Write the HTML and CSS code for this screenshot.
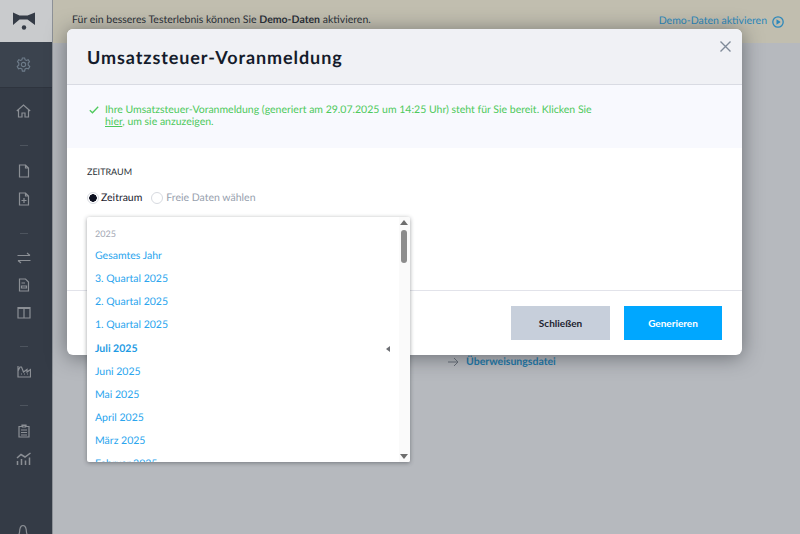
FILE: index.html
```html
<!DOCTYPE html>
<html>
<head>
  <title>Umsatzsteuer-Voranmeldung</title>
  <meta http-equiv="content-type" content="text/html; charset=utf-8" />
  <link rel="stylesheet" href="styles.css">
</head>
<body>
  <div class="app">
    <div class="sidebar">
      <div class="logo">
        <svg width="24" height="18" viewBox="0 0 24 18"><path d="M1 0.500 L7.500 3.500 H15.500 L23 0.500 V13 L15.500 7.500 H7.500 L1 13 Z" fill="#343b46"/><circle cx="12" cy="15.500" r="2.200" fill="#343b46"/></svg>
      </div>
      <div class="settings">
        <svg class="icon" width="15" height="15" viewBox="0 0 16 16"><path d="M6.800 1 H9.200 L9.700 3 L11.200 3.700 L13 2.900 L14.400 5 L13 6.500 V8.500 L14.700 10.300 L13.300 12.600 L11.200 12 L9.700 12.800 L9.200 15 H6.800 L6.300 12.800 L4.800 12 L2.700 12.600 L1.300 10.300 L3 8.500 V6.500 L1.600 5 L3 2.900 L4.800 3.700 L6.300 3 Z"/><circle cx="8" cy="8" r="2.300"/></svg>
      </div>
      <div class="nav-group nav-home">
        <svg class="icon" width="15" height="14" viewBox="0 0 15 14"><path d="M0.800 7 L7.500 1 L14.200 7 M2.500 5.800 V13 H6 V9 H9 V13 H12.500 V5.800"/></svg>
      </div>
      <div class="sep"></div>
      <div class="nav-group">
        <svg class="icon" width="12" height="14" viewBox="0 0 12 14"><path d="M1.500 1 H7.500 L10.500 4 V13 H1.500 Z M7.500 1 V4 H10.500"/></svg>
        <svg class="icon" width="12" height="14" viewBox="0 0 12 14"><path d="M1.500 1 H7.500 L10.500 4 V13 H1.500 Z M7.500 1 V4 H10.500 M6 6 V11 M3.500 8.500 H8.500"/></svg>
      </div>
      <div class="sep"></div>
      <div class="nav-group">
        <svg class="icon" width="14" height="12" viewBox="0 0 14 12"><path d="M0.500 3.500 H13 M10 1 L13 3.500 M13.500 8.500 H1 M4 11 L1 8.500"/></svg>
        <svg class="icon" width="12" height="14" viewBox="0 0 12 14"><path d="M1.500 1 H7.500 L10.500 4 V13 H1.500 Z M3.500 5 H7 M3.500 8 H8.500 V10 H3.500 Z"/></svg>
        <svg class="icon" width="14" height="13" viewBox="0 0 14 13"><path d="M1 1.500 H13 V12 H1 Z M7 1.500 V12 M1 2.500 H13"/></svg>
      </div>
      <div class="sep"></div>
      <div class="nav-group">
        <svg class="icon" width="14" height="13" viewBox="0 0 14 13"><path d="M1 1 V12 H13.500 V4.500 L10 7 V4.500 L6.500 7 L4.500 2 H3 L1 6"/><path d="M4 9 H5 M7 9 H8 M10 9 H11"/></svg>
      </div>
      <div class="sep"></div>
      <div class="nav-group">
        <svg class="icon" width="12" height="14" viewBox="0 0 12 14"><path d="M1 2.500 H4 V1 H8 V2.500 H11 V13 H1 Z"/><path d="M4.500 1.500 H7.500 V3 H4.500 Z M3 6 H9 M3 8.500 H9 M3 11 H9"/></svg>
        <svg class="icon" width="16" height="14" viewBox="0 0 16 14"><path d="M1 6 L5 2.500 L9 5 L14.500 1 M1.500 9 V13 M5.500 7 V13 M9.500 8.500 V13 M13.500 5.500 V13" stroke-width="1.500"/></svg>
      </div>
      <div class="bell">
        <svg class="icon" width="14" height="12" viewBox="0 0 14 12"><path d="M1 11 H13 M2.500 11 C4 9 3.500 6 4 4.500 C4.500 2.500 6 1.500 7 1.500 C8 1.500 9.500 2.500 10 4.500 C10.500 6 10 9 11.500 11"/></svg>
      </div>
    </div>

    <div class="main">
      <div class="banner">
        <p>Für ein besseres Testerlebnis können Sie <b>Demo-Daten</b> aktivieren.</p>
        <a class="banner-link">Demo-Daten aktivieren
          <svg width="12" height="12" viewBox="0 0 12 12"><circle cx="6" cy="6" r="5.200" fill="none" stroke="#2d88bb" stroke-width="1.300"/><path d="M4.500 3.300 L8.700 6 L4.500 8.700 Z" fill="#2d88bb"/></svg>
        </a>
      </div>
      <div class="behind">
        <svg width="11" height="10" viewBox="0 0 11 10"><path d="M0 5 H10 M6 1 L10 5 L6 9" fill="none" stroke="#69707a" stroke-width="1"/></svg>
        <a>Überweisungsdatei</a>
      </div>
    </div>
  </div>

  <div class="modal">
    <div class="modal-head">
      <h1>Umsatzsteuer-Voranmeldung</h1>
      <svg class="close" width="11" height="11" viewBox="0 0 11 11"><path d="M0.500 0.500 L10.500 10.500 M10.500 0.500 L0.500 10.500" stroke="#7f8a99" stroke-width="1.400"/></svg>
    </div>
    <div class="alert">
      <svg width="10" height="8" viewBox="0 0 10 8"><path d="M0.800 4.200 L3.500 6.800 L9.200 0.800" fill="none" stroke="#4ec95c" stroke-width="1.300"/></svg>
      <p>Ihre Umsatzsteuer-Voranmeldung (generiert am 29.07.2025 um 14:25 Uhr) steht für Sie bereit. Klicken Sie <u>hier</u>, um sie anzuzeigen.</p>
    </div>
    <div class="modal-body">
      <div class="label">ZEITRAUM</div>
      <div class="radios">
        <span class="radio on"></span><span class="radio-text">Zeitraum</span>
        <span class="radio"></span><span class="radio-text off">Freie Daten wählen</span>
      </div>
    </div>
    <div class="modal-foot">
      <button class="btn btn-grey">Schließen</button>
      <button class="btn btn-blue">Generieren</button>
    </div>
  </div>

  <div class="dropdown">
    <div class="list">
      <div class="year">2025</div>
      <div class="item">Gesamtes Jahr</div>
      <div class="item">3. Quartal 2025</div>
      <div class="item">2. Quartal 2025</div>
      <div class="item">1. Quartal 2025</div>
      <div class="item active">Juli 2025<span class="marker"></span></div>
      <div class="item">Juni 2025</div>
      <div class="item">Mai 2025</div>
      <div class="item">April 2025</div>
      <div class="item">März 2025</div>
      <div class="item">Februar 2025</div>
    </div>
    <div class="scroll">
      <span class="arrow-up"></span>
      <span class="thumb"></span>
      <span class="arrow-down"></span>
    </div>
  </div>
</body>
</html>
```

FILE: styles.css
```css
html, body {
  margin: 0;
  height: 534px;
  overflow: hidden;
}
body {
  font-family: "Lato", "Liberation Sans", sans-serif;
  font-size: 10.500px;
  text-rendering: geometricPrecision;
  background-color: #b6b9be;
  color: #1c2330;
}
p {
  margin: 0;
}
.app {
  display: flex;
  height: 534px;
}

/* sidebar */
.sidebar {
  width: 52px;
  height: 534px;
  flex-shrink: 0;
  background-color: #343b46;
  border-right: 1px solid #8d9197;
  display: flex;
  flex-direction: column;
  align-items: center;
  position: relative;
}
.logo {
  width: 100%;
  height: 42px;
  background-color: #c9cbcd;
  box-sizing: border-box;
  padding-right: 5px;
  display: flex;
  justify-content: center;
  align-items: center;
}
.settings {
  width: 100%;
  height: 46px;
  background-color: #3b434e;
  border-bottom: 1px solid #2e343e;
  box-sizing: border-box;
  padding-right: 5px;
  display: flex;
  justify-content: center;
  align-items: center;
}
.icon {
  display: block;
  fill: none;
  stroke: #8b8f95;
  stroke-width: 1.200;
}
.settings .icon {
  stroke: #6e7c8a;
}
.nav-group {
  display: flex;
  flex-direction: column;
  align-items: center;
  gap: 14px;
  margin-right: 5px;
}
.nav-home {
  margin-top: 16px;
}
.sep {
  width: 8px;
  height: 1px;
  background-color: #4d545e;
  margin: 27px 5px 18px 0;
}
.bell {
  position: absolute;
  bottom: -2px;
  left: 16px;
}

/* page behind the modal */
.main {
  flex: 1;
  min-width: 0;
}
.banner {
  height: 43px;
  background-color: #c1beaf;
  display: flex;
  justify-content: space-between;
  padding: 0 16px 0 19px;
  box-sizing: border-box;
  line-height: 41px;
  color: #2b3038;
}
.banner-link {
  color: #2d88bb;
  display: flex;
  align-items: center;
  gap: 5px;
}
.behind {
  margin: 312px 0 0 395px;
  display: flex;
  align-items: center;
  gap: 7px;
  font-weight: 700;
  color: #1f79ab;
  line-height: 14px;
}

/* modal */
.modal {
  position: absolute;
  left: 67px;
  top: 29px;
  width: 675px;
  height: 326px;
  background-color: #fff;
  border-radius: 6px;
  box-shadow: 0 2px 20px rgba(30, 34, 40, 0.500);
  overflow: hidden;
  display: flex;
  flex-direction: column;
}
.modal-head {
  height: 56px;
  flex-shrink: 0;
  box-sizing: border-box;
  background-color: #f0f1f5;
  border-bottom: 1px solid #d9dbe3;
  padding-left: 20px;
  position: relative;
}
.modal-head h1 {
  margin: 0;
  font-size: 18px;
  font-weight: 700;
  letter-spacing: 0.900px;
  line-height: 56px;
  color: #141b2b;
}
.close {
  position: absolute;
  right: 11px;
  top: 12px;
}
.alert {
  height: 63px;
  flex-shrink: 0;
  box-sizing: border-box;
  background-color: #f8f9fe;
  padding: 19px 0 0 22px;
  display: flex;
  gap: 6px;
  color: #4ec95c;
  line-height: 12px;
}
.alert svg {
  flex-shrink: 0;
  margin-top: 2px;
}
.alert p {
  width: 490px;
}
.modal-body {
  flex: 1;
  padding: 18px 20px 0;
}
.label {
  font-size: 9px;
  line-height: 12px;
  color: #2b3038;
}
.radios {
  margin-top: 13px;
  display: flex;
  align-items: center;
  line-height: 14px;
}
.radio {
  width: 12px;
  height: 12px;
  box-sizing: border-box;
  border: 1px solid #d7dae0;
  border-radius: 50%;
  background-color: #fff;
}
.radio.on {
  background: radial-gradient(circle, #0c1020 0, #0c1020 3.500px, #fff 4px);
}
.radio-text {
  margin: 0 9px 0 2px;
}
.radio-text.off {
  color: #98a1ae;
  margin-left: 3px;
}
.modal-foot {
  height: 65px;
  flex-shrink: 0;
  box-sizing: border-box;
  border-top: 1px solid #e2e3ea;
  padding: 15px 20px 0 0;
  display: flex;
  justify-content: flex-end;
  gap: 14px;
}
.btn {
  width: 98px;
  height: 34px;
  border: none;
  padding: 0;
  font-family: inherit;
  font-size: 10px;
  font-weight: 700;
}
.btn-grey {
  width: 99px;
  background-color: #c7cfdb;
  color: #1c2330;
}
.btn-blue {
  background-color: #00a7ff;
  color: #fff;
}

/* select dropdown */
.dropdown {
  position: absolute;
  left: 87px;
  top: 217px;
  width: 323px;
  height: 245px;
  background-color: #fff;
  border-radius: 2px;
  box-shadow: 0 1px 4px rgba(40, 44, 52, 0.450);
  overflow: hidden;
}
.list {
  padding-top: 6px;
}
.year {
  height: 22px;
  line-height: 21px;
  padding-left: 8px;
  font-size: 9px;
  color: #a3a8b3;
}
.item {
  height: 23.150px;
  line-height: 23px;
  padding-left: 8px;
  color: #2aa5ee;
  position: relative;
}
.item.active {
  font-weight: 700;
  color: #1f9be4;
}
.marker {
  position: absolute;
  left: 299px;
  top: 8px;
  border-top: 3.500px solid transparent;
  border-bottom: 3.500px solid transparent;
  border-right: 4px solid #6d6f74;
}
.scroll {
  position: absolute;
  right: 0;
  top: 0;
  width: 11px;
  height: 245px;
  background-color: #fafafa;
}
.thumb {
  position: absolute;
  left: 2px;
  top: 13px;
  width: 6px;
  height: 33px;
  background-color: #8c8c8c;
  border-radius: 3px;
}
.arrow-up, .arrow-down {
  position: absolute;
  left: 1px;
  border-left: 4px solid transparent;
  border-right: 4px solid transparent;
}
.arrow-up {
  top: 3px;
  border-bottom: 5px solid #6d6d6d;
}
.arrow-down {
  bottom: 3px;
  border-top: 5px solid #6d6d6d;
}
```
